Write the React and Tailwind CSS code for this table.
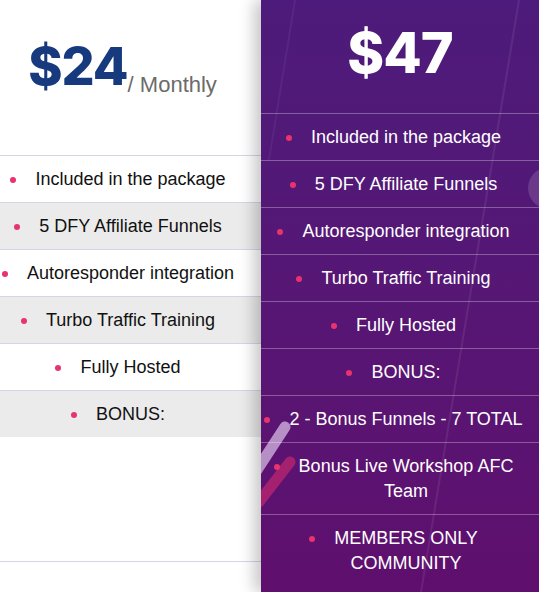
import React from 'react';

const basic = [
    'Included in the package',
    '5 DFY Affiliate Funnels',
    'Autoresponder integration',
    'Turbo Traffic Training',
    'Fully Hosted',
    'BONUS:',
];

const pro = [
    ...basic,
    '2 - Bonus Funnels - 7 TOTAL',
    'Bonus Live Workshop AFC Team',
    'MEMBERS ONLY COMMUNITY',
];

// bullet sits at the start of the first line, like a list marker
const Item = ({ children, className }) => (
    <li className={`relative text-center border-t py-[10.5px] leading-[25px] ${className}`}>
        <span className="absolute -ml-[25px] mt-[10px] w-[6px] h-[6px] rounded-full bg-[#e8336d]"></span>
        {children}
    </li>
);

const App = () => {
    return (
        <div className="flex w-[539px] h-[592px] overflow-hidden bg-white font-['Liberation_Sans',Arial,sans-serif]">
            {/* Basic plan */}
            <div className="w-[261px] shrink-0 flex flex-col">
                <div className="h-[155px] flex items-start justify-center pr-4 pt-[41px]">
                    <span className="font-['Inter',sans-serif] font-extrabold text-[52px] leading-none text-[#173a7e] tracking-[-1px]">$24</span>
                    <span className="text-[22px] text-[#6b6b6b] mt-[27px]">/ Monthly</span>
                </div>
                <ul className="text-[18px] text-[#111]">
                    {basic.map((item, i) => (
                        <Item key={i} className={`border-[#d3d7e2] ${i % 2 === 1 ? 'bg-[#ebebeb]' : 'bg-white'}`}>
                            {item}
                        </Item>
                    ))}
                </ul>
                <div className="h-[125px] border-b border-[#d3d7e2]"></div>
            </div>

            {/* Pro plan */}
            <div className="relative z-10 flex-1 flex flex-col bg-gradient-to-b from-[#4d1b7b] to-[#5f0f6e] shadow-[-7px_0_14px_rgba(0,0,0,0.22)]">
                {/* Background decoration */}
                <svg className="absolute inset-0 w-full h-full pointer-events-none" viewBox="0 0 278 592" preserveAspectRatio="none">
                    <line x1="258" y1="0" x2="160" y2="592" stroke="rgba(255,255,255,0.08)" strokeWidth="2" />
                    <line x1="34" y1="0" x2="8" y2="160" stroke="rgba(255,255,255,0.05)" strokeWidth="2" />
                    <circle cx="288" cy="188" r="21" fill="rgba(255,255,255,0.14)" />
                    <line x1="24" y1="427" x2="-4" y2="470" stroke="rgba(214,186,228,0.75)" strokeWidth="11" strokeLinecap="round" />
                    <line x1="29" y1="462" x2="-2" y2="502" stroke="rgba(178,36,110,0.85)" strokeWidth="11" strokeLinecap="round" />
                </svg>

                <div className="relative h-[113px] flex items-start justify-center pt-[25px]">
                    <span className="font-['Inter',sans-serif] font-extrabold text-[56px] leading-none text-white tracking-[-1px]">$47</span>
                </div>
                <ul className="relative text-[18px] text-white">
                    {pro.map((item, i) => (
                        <Item key={i} className="border-white/30 pl-[26px] pr-[14px]">
                            {item}
                        </Item>
                    ))}
                </ul>
            </div>
        </div>
    );
};

export default App;
